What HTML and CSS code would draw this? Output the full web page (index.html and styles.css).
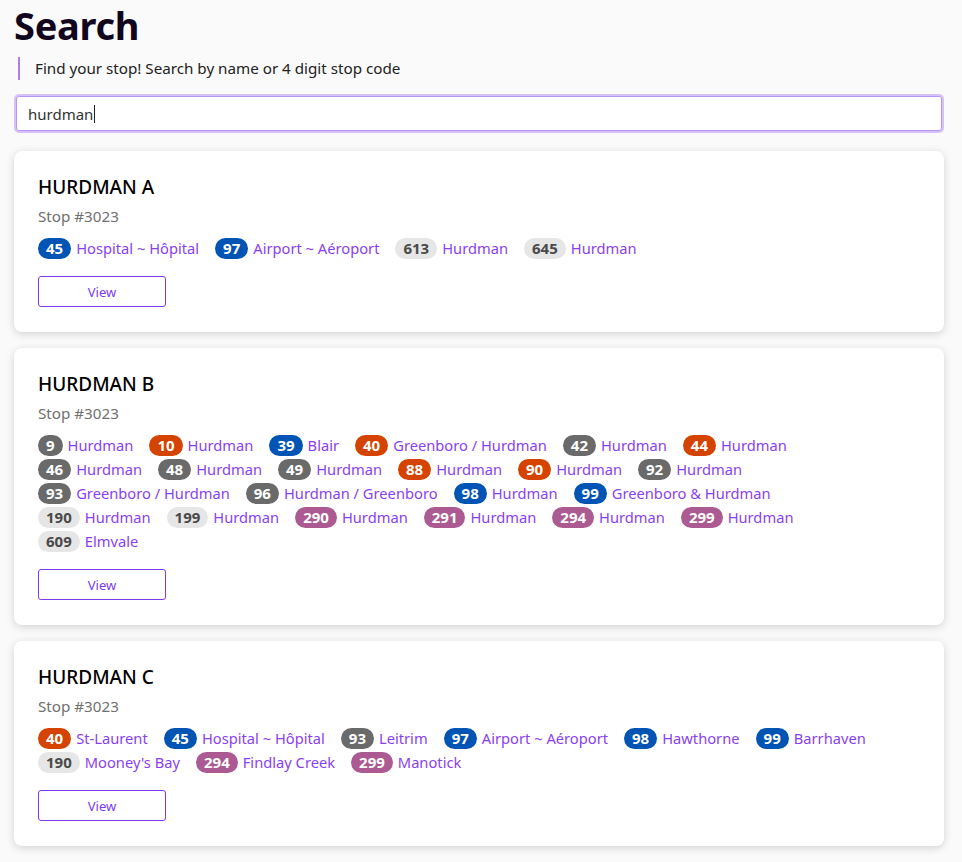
FILE: index.html
```html
<!DOCTYPE html>
<html>
<head>
<meta charset="utf-8">
<link rel="stylesheet" href="styles.css">
</head>
<body>
<main class="page">
  <h1 class="title">Search</h1>
  <p class="lede">Find your stop! Search by name or 4 digit stop code</p>
  <div class="search"><span class="search-text">hurdman</span><span class="caret"></span></div>

  <section class="card">
    <h2 class="stop-name">HURDMAN A</h2>
    <div class="stop-code">Stop #3023</div>
    <ul class="routes">
      <li class="route"><span class="badge blue">45</span><a class="dest">Hospital ~ Hôpital</a></li>
      <li class="route"><span class="badge blue">97</span><a class="dest">Airport ~ Aéroport</a></li>
      <li class="route"><span class="badge light">613</span><a class="dest">Hurdman</a></li>
      <li class="route"><span class="badge light">645</span><a class="dest">Hurdman</a></li>
    </ul>
    <button class="view">View</button>
  </section>

  <section class="card">
    <h2 class="stop-name">HURDMAN B</h2>
    <div class="stop-code">Stop #3023</div>
    <ul class="routes">
      <li class="route"><span class="badge grey">9</span><a class="dest">Hurdman</a></li>
      <li class="route"><span class="badge orange">10</span><a class="dest">Hurdman</a></li>
      <li class="route"><span class="badge blue">39</span><a class="dest">Blair</a></li>
      <li class="route"><span class="badge orange">40</span><a class="dest">Greenboro / Hurdman</a></li>
      <li class="route"><span class="badge grey">42</span><a class="dest">Hurdman</a></li>
      <li class="route"><span class="badge orange">44</span><a class="dest">Hurdman</a></li>
      <li class="route"><span class="badge grey">46</span><a class="dest">Hurdman</a></li>
      <li class="route"><span class="badge grey">48</span><a class="dest">Hurdman</a></li>
      <li class="route"><span class="badge grey">49</span><a class="dest">Hurdman</a></li>
      <li class="route"><span class="badge orange">88</span><a class="dest">Hurdman</a></li>
      <li class="route"><span class="badge orange">90</span><a class="dest">Hurdman</a></li>
      <li class="route"><span class="badge grey">92</span><a class="dest">Hurdman</a></li>
      <li class="route"><span class="badge grey">93</span><a class="dest">Greenboro / Hurdman</a></li>
      <li class="route"><span class="badge grey">96</span><a class="dest">Hurdman / Greenboro</a></li>
      <li class="route"><span class="badge blue">98</span><a class="dest">Hurdman</a></li>
      <li class="route"><span class="badge blue">99</span><a class="dest">Greenboro &amp; Hurdman</a></li>
      <li class="route"><span class="badge light">190</span><a class="dest">Hurdman</a></li>
      <li class="route"><span class="badge light">199</span><a class="dest">Hurdman</a></li>
      <li class="route"><span class="badge purple">290</span><a class="dest">Hurdman</a></li>
      <li class="route"><span class="badge purple">291</span><a class="dest">Hurdman</a></li>
      <li class="route"><span class="badge purple">294</span><a class="dest">Hurdman</a></li>
      <li class="route"><span class="badge purple">299</span><a class="dest">Hurdman</a></li>
      <li class="route"><span class="badge light">609</span><a class="dest">Elmvale</a></li>
    </ul>
    <button class="view">View</button>
  </section>

  <section class="card">
    <h2 class="stop-name">HURDMAN C</h2>
    <div class="stop-code">Stop #3023</div>
    <ul class="routes">
      <li class="route"><span class="badge orange">40</span><a class="dest">St-Laurent</a></li>
      <li class="route"><span class="badge blue">45</span><a class="dest">Hospital ~ Hôpital</a></li>
      <li class="route"><span class="badge grey">93</span><a class="dest">Leitrim</a></li>
      <li class="route"><span class="badge blue">97</span><a class="dest">Airport ~ Aéroport</a></li>
      <li class="route"><span class="badge blue">98</span><a class="dest">Hawthorne</a></li>
      <li class="route"><span class="badge blue">99</span><a class="dest">Barrhaven</a></li>
      <li class="route"><span class="badge light">190</span><a class="dest">Mooney's Bay</a></li>
      <li class="route"><span class="badge purple">294</span><a class="dest">Findlay Creek</a></li>
      <li class="route"><span class="badge purple">299</span><a class="dest">Manotick</a></li>
    </ul>
    <button class="view">View</button>
  </section>
</main>
</body>
</html>
```

FILE: styles.css
```css
html, body {
  margin: 0;
  padding: 0;
  background: #fafafa;
}
body {
  font-family: "Noto Sans", "Open Sans", sans-serif;
  color: #111;
}
.page {
  padding: 0 18px 16px 14px;
  display: flex;
  flex-direction: column;
}
.title {
  margin: 2px 0 0 0;
  font-size: 38px;
  line-height: 46px;
  font-weight: 700;
  color: #12061f;
  letter-spacing: -0.3px;
}
.lede {
  margin: 9px 0 0 4px;
  padding: 0 0 0 15px;
  border-left: 2px solid #b27cf0;
  font-size: 15.2px;
  line-height: 23px;
  color: #222;
}
.search {
  margin-top: 14px;
  height: 35px;
  border: 2px solid #d6c2fb;
  border-radius: 5px;
  background: #fff;
  display: flex;
  align-items: center;
  padding: 0 12px;
  box-shadow: inset 0 0 0 1px #b596f0;
}
.search-text {
  font-size: 15px;
  color: #333;
}
.caret {
  display: inline-block;
  width: 1px;
  height: 18px;
  background: #222;
  margin-left: 1px;
}
.card {
  margin-top: 18px;
  background: #fff;
  border-radius: 8px;
  box-shadow: 0 2px 8px rgba(0, 0, 0, 0.16);
  padding: 24px 24px 25px 24px;
  display: flex;
  flex-direction: column;
  align-items: flex-start;
}
.card + .card {
  margin-top: 16px;
}
.stop-name {
  margin: 0;
  font-size: 19px;
  line-height: 24px;
  font-weight: 500;
  color: #000;
}
.stop-code {
  margin-top: 7px;
  font-size: 15.2px;
  line-height: 20px;
  color: #707070;
}
.routes {
  list-style: none;
  margin: 12px 0 0 0;
  padding: 0 20px 0 0;
  display: flex;
  flex-wrap: wrap;
  row-gap: 3px;
  align-self: stretch;
}
.route {
  display: flex;
  align-items: center;
  gap: 5px;
  height: 21px;
  margin-right: 16px;
}
.badge {
  display: inline-flex;
  align-items: center;
  justify-content: center;
  height: 21px;
  padding: 0 8px;
  border-radius: 11px;
  font-size: 15px;
  font-weight: 700;
  color: #fff;
  line-height: 21px;
}
.blue { background: #0054b4; }
.orange { background: #d54300; }
.grey { background: #6a6a6a; }
.light { background: #e6e6e6; color: #4a4a4a; }
.purple { background: #ab5b91; }
.dest {
  font-size: 14.7px;
  color: #8a3ff0;
  line-height: 21px;
}
.view {
  margin-top: 17px;
  width: 128px;
  height: 31px;
  background: #fff;
  border: 1px solid #7c3aed;
  border-radius: 3px;
  font-family: "Noto Sans", "Open Sans", sans-serif;
  font-size: 13px;
  color: #7c3aed;
  cursor: pointer;
}
```
